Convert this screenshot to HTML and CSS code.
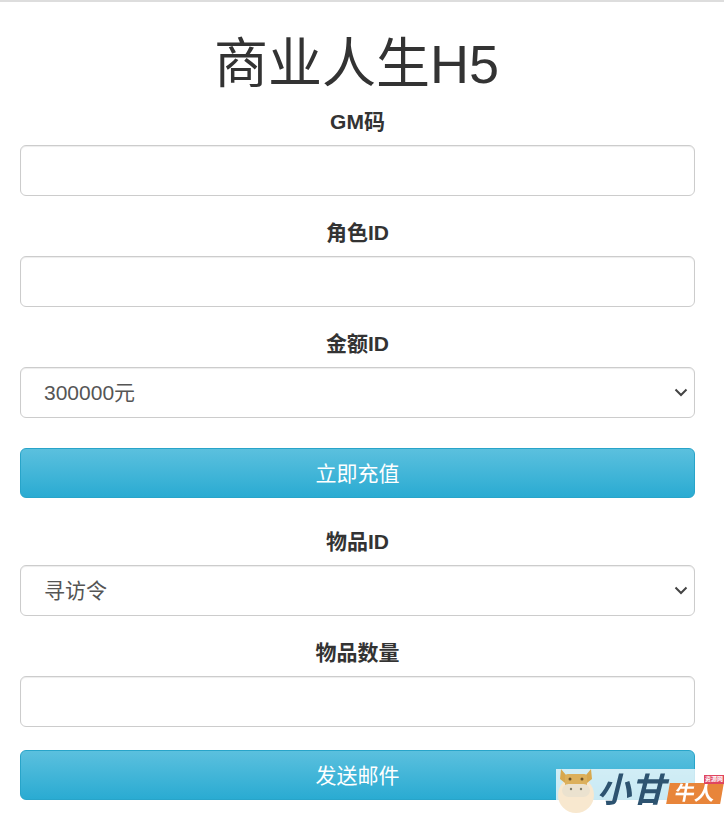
FILE: index.html
```html
<!DOCTYPE html>
<html>
<head>
    <meta charset="utf-8">
    <title>商业人生H5</title>
    <link rel="stylesheet" href="styles.css">
</head>
<body>

    <div class="container">
        <h1 class="page-title">商业人生H5</h1>

        <form class="gm-form">
            <div class="form-group">
                <label for="gmCode">GM码</label>
                <input type="text" id="gmCode" class="form-control">
            </div>
            <div class="form-group">
                <label for="roleId">角色ID</label>
                <input type="text" id="roleId" class="form-control">
            </div>
            <div class="form-group">
                <label for="moneyId">金额ID</label>
                <select id="moneyId" class="form-control select-control">
                    <option>300000元</option>
                </select>
            </div>
            <button type="button" class="btn-info">立即充值</button>

            <div class="form-group form-group-next">
                <label for="itemId">物品ID</label>
                <select id="itemId" class="form-control select-control">
                    <option>寻访令</option>
                </select>
            </div>
            <div class="form-group">
                <label for="itemCount">物品数量</label>
                <input type="text" id="itemCount" class="form-control">
            </div>
            <button type="button" class="btn-info btn-last">发送邮件</button>
        </form>
    </div>

    <div class="watermark">
        <svg class="watermark-cow" width="38" height="46" viewBox="0 0 38 46">
            <circle cx="19" cy="27" r="18" fill="#f8e8cf"/>
            <path d="M4 1 L9 7 L29 7 L34 1 L35 11 L30 15 L8 15 L3 11 Z" fill="#d8a84e"/>
            <rect x="8" y="6" width="22" height="13" rx="3" fill="#dcb05c"/>
            <rect x="5" y="16" width="28" height="13" rx="6.5" fill="#ebe2cf"/>
            <circle cx="13" cy="11" r="1.5" fill="#6a5026"/>
            <circle cx="25" cy="11" r="1.5" fill="#6a5026"/>
            <circle cx="14" cy="21" r="1.2" fill="#7b7b6a"/>
            <circle cx="24" cy="21" r="1.2" fill="#7b7b6a"/>
        </svg>
        <span class="watermark-name">小甘</span>
        <span class="watermark-tag">牛人</span>
        <small class="watermark-corner">资源网</small>
    </div>

</body>
</html>
```

FILE: styles.css
```css
* {
    box-sizing: border-box;
}

body {
    font-family: "Liberation Sans", Arial, "Noto Sans CJK SC", sans-serif;
    margin: 0;
    padding: 0;
    background-color: #ffffff;
    color: #333333;
    border-top: 2px solid #dddddd;
}

.container {
    padding: 0 29px 0 20px;
}

.page-title {
    margin: 27px 0 8px;
    padding-right: 2px;
    height: 70px;
    line-height: 70px;
    text-align: center;
    font-size: 54px;
    font-weight: 400;
}

.form-group {
    margin-bottom: 22px;
    text-align: center;
}

.form-group label {
    display: block;
    height: 30px;
    line-height: 30px;
    margin-bottom: 8px;
    font-size: 21px;
    font-weight: 700;
}

.form-control {
    display: block;
    width: 100%;
    height: 51px;
    padding: 10px 20px;
    font-family: inherit;
    font-size: 21px;
    color: #555555;
    background-color: #ffffff;
    border: 1px solid #cccccc;
    border-radius: 6px;
    box-shadow: inset 0 1px 1px rgba(0, 0, 0, 0.075);
}

.select-control {
    appearance: none;
    padding-left: 23px;
    background-image: url("data:image/svg+xml,%3Csvg xmlns='http://www.w3.org/2000/svg' width='14' height='9' viewBox='0 0 14 9'%3E%3Cpath d='M1.5 1.5 L7 7 L12.5 1.5' fill='none' stroke='%23444' stroke-width='2'/%3E%3C/svg%3E");
    background-repeat: no-repeat;
    background-position: right 6px center;
}

.btn-info {
    display: block;
    width: 100%;
    height: 50px;
    margin-top: 30px;
    padding: 0 0 3px;
    font-family: inherit;
    font-size: 21px;
    color: #ffffff;
    background-image: linear-gradient(to bottom, #5bc0de 0, #2aabd2 100%);
    border: 1px solid #28a4c9;
    border-radius: 6px;
    cursor: pointer;
}

.btn-last {
    margin-top: 23px;
}

.form-group-next {
    margin-top: 29px;
}

/* site logo stamped over the corner */
.watermark {
    position: fixed;
    right: 0;
    bottom: 14px;
    width: 168px;
    height: 31px;
    background-color: rgba(255, 255, 255, 0.75);
}

.watermark-cow {
    position: absolute;
    left: 1px;
    top: -1px;
}

.watermark-name {
    position: absolute;
    left: 41px;
    top: 1px;
    font-size: 34px;
    line-height: 40px;
    font-weight: 700;
    font-style: italic;
    color: #2d5370;
    white-space: nowrap;
}

.watermark-tag {
    position: absolute;
    left: 112px;
    top: 14px;
    width: 54px;
    height: 21px;
    font-size: 20px;
    font-weight: 700;
    line-height: 21px;
    text-align: center;
    color: #ffffff;
    background-color: #e8853a;
    transform: skewX(-10deg);
}

.watermark-corner {
    position: absolute;
    right: 0;
    top: 6px;
    width: 20px;
    font-size: 6px;
    font-weight: 700;
    line-height: 9px;
    text-align: center;
    color: #ffffff;
    background-color: #e0455f;
}
```
